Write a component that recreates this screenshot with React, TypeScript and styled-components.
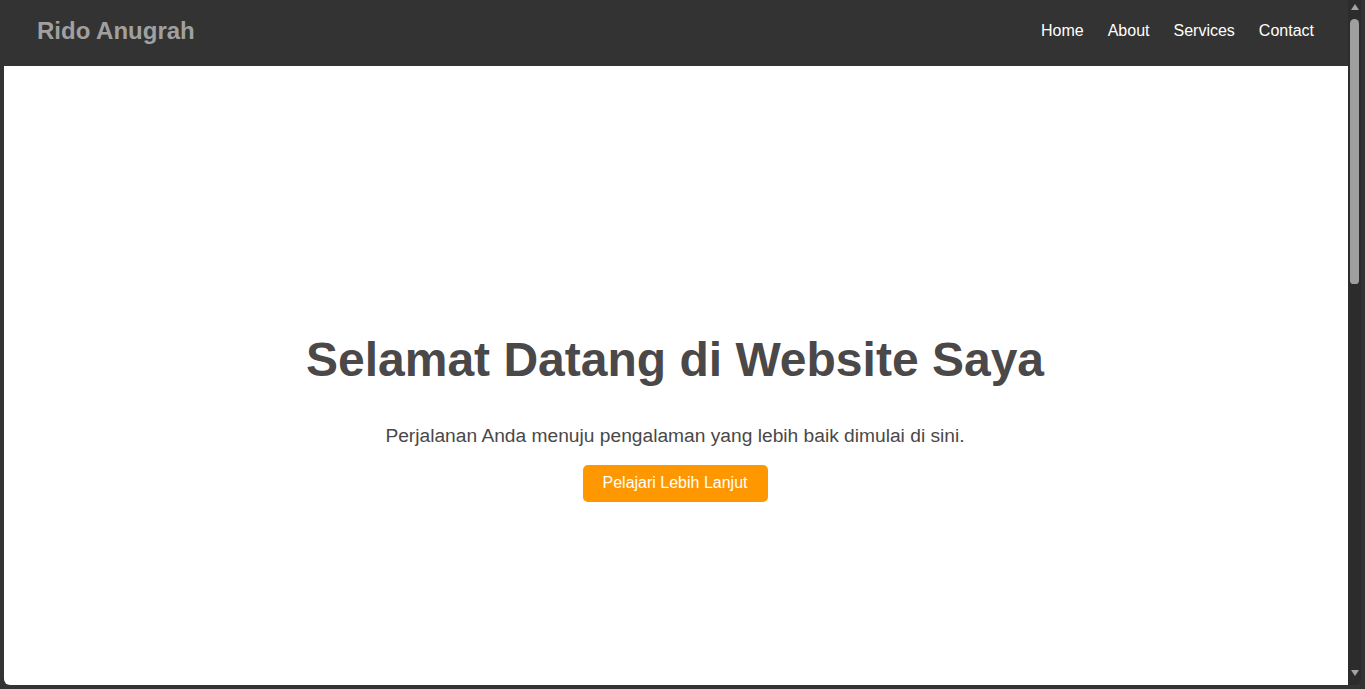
import React from "react";
import styled, { createGlobalStyle } from "styled-components";

const GlobalStyle = createGlobalStyle`
  html, body {
    margin: 0;
    padding: 0;
    height: 100%;
    overflow: hidden;
    background: #333333;
  }
  * { box-sizing: border-box; }
`;

const Window = styled.div`
  height: 689px;
  display: flex;
  padding: 0 4px 4px 4px;
  background: #333333;
  font-family: "Liberation Sans", Arial, sans-serif;
`;

const Page = styled.div`
  flex: 1;
  display: flex;
  flex-direction: column;
  background: #ffffff;
  border-bottom-left-radius: 6px;
  overflow: hidden;
`;

const NavBar = styled.header`
  height: 66px;
  flex: none;
  display: flex;
  align-items: center;
  justify-content: space-between;
  padding: 0 34px 5px 33px;
  background: #333333;
`;

const Logo = styled.div`
  font-size: 24px;
  font-weight: 700;
  color: #a0a0a0;
`;

const NavList = styled.nav`
  display: flex;
  gap: 24px;
`;

const NavLink = styled.a`
  font-size: 16px;
  color: #ffffff;
  text-decoration: none;
`;

const Hero = styled.main`
  flex: 1;
  display: flex;
  flex-direction: column;
  align-items: center;
  padding-top: 266px;
  padding-right: 2px;
  color: #4a4848;
  text-align: center;
`;

const Title = styled.h1`
  margin: 0;
  font-size: 48px;
  line-height: 55px;
  font-weight: 700;
`;

const Lead = styled.p`
  margin: 38px 0 0 0;
  font-size: 19.2px;
  line-height: 22px;
`;

const CtaButton = styled.button`
  margin-top: 18px;
  padding: 9px 20px 11px 20px;
  border: none;
  border-radius: 5px;
  background: #ff9800;
  color: #ffffff;
  font-family: "Liberation Sans", Arial, sans-serif;
  font-size: 16px;
  line-height: 17px;
  cursor: pointer;
`;

const ScrollTrack = styled.div`
  width: 13px;
  flex: none;
  display: flex;
  flex-direction: column;
  align-items: center;
  padding: 4px 0 9px 0;
  background: #2c2c2c;
  border-bottom-right-radius: 6px;
`;

const Thumb = styled.div`
  width: 9px;
  height: 265px;
  margin-top: 9px;
  border-radius: 5px 5px 4px 4px;
  background: #9f9f9f;
`;

const Spacer = styled.div`
  flex: 1;
`;

const Arrow = ({ down }: { down?: boolean }) => (
  <svg width="8" height="6" viewBox="0 0 8 6" style={{ display: "block" }}>
    <polygon
      points={down ? "0,0 8,0 4,6" : "4,0 8,6 0,6"}
      fill="#a3a3a3"
    />
  </svg>
);

export default function App() {
  return (
    <>
      <GlobalStyle />
      <Window>
        <Page>
          <NavBar>
            <Logo>Rido Anugrah</Logo>
            <NavList>
              <NavLink href="#">Home</NavLink>
              <NavLink href="#">About</NavLink>
              <NavLink href="#">Services</NavLink>
              <NavLink href="#">Contact</NavLink>
            </NavList>
          </NavBar>
          <Hero>
            <Title>Selamat Datang di Website Saya</Title>
            <Lead>Perjalanan Anda menuju pengalaman yang lebih baik dimulai di sini.</Lead>
            <CtaButton>Pelajari Lebih Lanjut</CtaButton>
          </Hero>
        </Page>
        <ScrollTrack>
          <Arrow />
          <Thumb />
          <Spacer />
          <Arrow down />
        </ScrollTrack>
      </Window>
    </>
  );
}
